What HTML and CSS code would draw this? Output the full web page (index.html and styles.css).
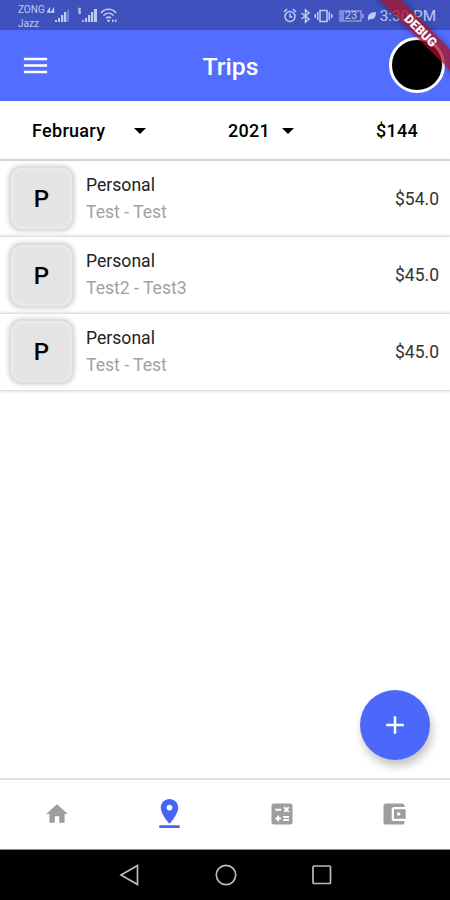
FILE: index.html
```html
<!DOCTYPE html>
<html lang="en">
<head>
<meta charset="utf-8">
<title>Trips</title>
<link rel="stylesheet" href="styles.css">
</head>
<body>
<div class="phone">
  <div class="status">
    <div class="carriers"><span>ZONG</span><span>Jazz</span></div>
    <svg class="signals" width="72" height="20" viewBox="0 0 72 20" fill="currentColor">
      <path d="M2.500 7V3L.5 6h3M6.500 7V3l-2 3h3" fill="none" stroke="currentColor" stroke-width="1.300"/>
      <path d="M8 14h2v2H8zM11 12h2v4h-2zM14 9h2.300v7H14zM17 6h2.300v10H17z"/>
      <path d="M20 4h2v12h-2z" opacity=".4"/>
      <path d="M34 2.500h-2v4.500h2M32 5h2" fill="none" stroke="currentColor" stroke-width="1.300"/>
      <path d="M35 14h1.600v2H35zM38 12h2v4h-2zM41 9h2.300v7H41zM44 6h2.300v10H44zM47 3h3v13h-3z"/>
      <g fill="none" stroke="currentColor" stroke-width="1.600"><path d="M54 7c4-5 11-5 15 0M56.500 9.500c3-3 7-3 10 0M59 12.200c2-1.500 3.500-1.500 5 0"/></g>
      <circle cx="61.500" cy="14.800" r="1.300"/><path d="M65 13.500h1.500V16H65zM68 13.500h1.500V16H68z"/>
    </svg>
    <div class="indicators">
      <svg width="82" height="18" viewBox="0 0 82 18" fill="none" stroke="currentColor" stroke-width="1.500">
        <circle cx="7" cy="9.500" r="5"/><path d="M7 6.500v3.500h2.500M1 5l3-3M13 5l-3-3"/>
        <path d="M18.500 6l7.500 6-3.500 3V3L26 6l-7.500 6"/>
        <path d="M37 3.500h7v11h-7zM34.700 5v8M32.300 7v4M46.300 5v8M48.700 7v4"/>
        <g opacity=".75"><rect x="57" y="4" width="21" height="10" stroke-width="1.200"/><path d="M80 7v4"/></g>
        <path d="M58 5h3v8h-3z" fill="currentColor" opacity=".5" stroke="none"/>
      </svg>
      <span class="battery">23</span>
      <svg class="leaf" width="10" height="10" viewBox="0 0 10 10" fill="currentColor"><path d="M1 9C0 4 3 1 9 1c0 5-2 8-6 7L1.500 9.500z"/></svg>
      <span class="clock">3:30 PM</span>
    </div>
  </div>
  <header class="appbar">
    <svg class="menu" width="31" height="31" viewBox="0 0 24 24" fill="currentColor"><path d="M3 18h18v-2H3v2zm0-5h18v-2H3v2zm0-7v2h18V6H3z"/></svg>
    <h1>Trips</h1>
    <div class="avatar"></div>
  </header>
  <div class="filters">
    <div class="select month"><span>February</span><i class="caret"></i></div>
    <div class="select year"><span>2021</span><i class="caret"></i></div>
    <div class="total">$144</div>
  </div>
  <main class="trips">
    <div class="trip"><div class="tile">P</div><div class="info"><div class="name">Personal</div><div class="route">Test - Test</div></div><div class="price">$54.0</div></div>
    <div class="trip"><div class="tile">P</div><div class="info"><div class="name">Personal</div><div class="route">Test2 - Test3</div></div><div class="price">$45.0</div></div>
    <div class="trip"><div class="tile">P</div><div class="info"><div class="name">Personal</div><div class="route">Test - Test</div></div><div class="price">$45.0</div></div>
  </main>
  <nav class="tabs">
    <div class="tab"><svg width="26" height="26" viewBox="0 0 24 24" fill="currentColor"><path d="M10 20v-6h4v6h5v-8h3L12 3 2 12h3v8z"/></svg></div>
    <div class="tab active"><svg width="35" height="35" viewBox="0 0 24 24" fill="currentColor"><path d="M18 8c0-3.310-2.690-6-6-6S6 4.690 6 8c0 4.500 6 11 6 11s6-6.500 6-11zm-8 0c0-1.100.900-2 2-2s2 .900 2 2-.890 2-2 2c-1.100 0-2-.900-2-2zM5 20v2h14v-2H5z"/></svg></div>
    <div class="tab"><svg width="28" height="28" viewBox="0 0 24 24"><rect x="3" y="3" width="18" height="18" rx="2" fill="currentColor"/><path d="M6.200 8.300h5M13.800 6.200l4 4M17.800 6.200l-4 4M13 14.600h5M13 17.100h5M8.700 13.300v5M6.200 15.800h5" fill="none" stroke="#fff" stroke-width="1.700"/></svg></div>
    <div class="tab"><svg width="28" height="28" viewBox="0 0 24 24" fill="currentColor"><path d="M21 18v1c0 1.100-.900 2-2 2H5c-1.110 0-2-.900-2-2V5c0-1.100.890-2 2-2h14c1.100 0 2 .900 2 2v1h-9c-1.110 0-2 .900-2 2v8c0 1.100.890 2 2 2h9zm-9-2h10V8H12v8zm4-2.500c-.830 0-1.500-.670-1.500-1.500s.670-1.500 1.500-1.500 1.500.670 1.500 1.500-.670 1.500-1.500 1.500z"/></svg></div>
  </nav>
  <div class="sysnav">
    <svg width="22" height="24" viewBox="0 0 22 24"><path d="M18.500 2.500v19L2 12z"/></svg>
    <svg width="24" height="24" viewBox="0 0 24 24"><circle cx="12" cy="12" r="9.700"/></svg>
    <svg width="22" height="24" viewBox="0 0 22 24"><rect x="2" y="3" width="17.500" height="17.500" rx="1"/></svg>
  </div>
  <div class="fab"><svg width="30" height="30" viewBox="0 0 24 24" fill="currentColor"><path d="M19 13h-6v6h-2v-6H5v-2h6V5h2v6h6v2z"/></svg></div>
  <div class="debug">DEBUG</div>
</div>
</body>
</html>
```

FILE: styles.css
```css
* { box-sizing: border-box; }
body { margin: 0; font-family: Roboto, sans-serif; color: #000; }
.phone { position: relative; display: flex; flex-direction: column; width: 450px; height: 900px; overflow: hidden; background: #fff; }
svg { display: block; flex: none; }

.status { display: flex; height: 30px; padding: 0 14px 0 18px; background: #3e51bd; color: #c0c9ef; }
.carriers { display: flex; flex-direction: column; width: 29px; padding-top: 3px; font-size: 10px; line-height: 13.5px; }
.signals { margin-top: 6px; }
.indicators { position: relative; display: flex; align-items: center; margin-left: auto; padding-top: 1px; }
.battery { position: absolute; left: 62px; top: 9px; font-size: 11px; line-height: 13px; }
.leaf { margin: 0 3px 0 2px; }
.clock { font-size: 15.3px; white-space: nowrap; }

.appbar { display: flex; align-items: center; height: 70.5px; padding: 0 5px 0 20px; background: #526dff; color: #fff; }
.appbar h1 { flex: 1; margin: 3px 0 0; text-align: center; font-size: 24.8px; font-weight: 500; line-height: 30px; }
.menu { margin: 1px 21px 0 0; }
.avatar { width: 56px; height: 56px; border: 3px solid #fff; border-radius: 50%; background: #000; }

.filters { display: flex; align-items: center; height: 60px; padding: 1px 32px 0; font-size: 18px; font-weight: 500; letter-spacing: .3px; border-bottom: 2px solid #dcdcdc; }
.select { display: flex; align-items: center; justify-content: space-between; }
.month { width: 114px; }
.year { width: 66px; margin-left: 82px; }
.total { margin-left: auto; }
.caret { border: 6px solid transparent; border-top-color: #000; border-bottom: 0; margin-top: 2px; }

.trip { display: flex; align-items: center; height: 76.5px; padding: 0 11px 0 9px; box-shadow: 0 0 3px 1px #ccc; background: #fff; }
.tile { display: flex; align-items: center; justify-content: center; width: 65px; height: 65px; padding-top: 1px; border: 2px solid #dedede; border-radius: 13px; background: #e4e4e4; box-shadow: 0 0 4px 1px #dadada, inset 0 0 3px 2px #ebebeb; font-size: 24px; font-weight: 500; }
.info { flex: 1; margin-left: 12px; }
.name { font-size: 17.6px; line-height: 27px; color: #222; }
.route { font-size: 17.6px; line-height: 27px; color: #a2a2a2; }
.price { font-size: 17.5px; color: #333; }

.tabs { display: flex; height: 72px; margin-top: auto; border-top: 2px solid #e0e0e0; border-bottom: 1px solid #888; padding: 0 0 2px 1px; background: #fff; color: #9e9e9e; }
.tab { display: flex; flex: 1; align-items: center; justify-content: center; }
.active { color: #4765f5; }

.sysnav { display: flex; align-items: center; justify-content: center; gap: 73px; height: 50px; padding-left: 1px; background: #000; }
.sysnav svg { fill: none; stroke: #bbb; stroke-width: 1.7; }

.fab { position: absolute; left: 360px; top: 689.5px; display: flex; align-items: center; justify-content: center; width: 70px; height: 70px; border-radius: 50%; background: #4b68fb; color: #fff; box-shadow: 2px 6px 10px rgba(0, 0, 0, .24); }
.debug { position: absolute; left: 361px; top: 23px; width: 120px; height: 14.5px; transform: rotate(45deg); background: rgba(170, 15, 35, .74); box-shadow: 0 0 6px rgba(0, 0, 0, .4); color: #fff; font-size: 12.5px; font-weight: 900; line-height: 15px; text-align: center; }
```
